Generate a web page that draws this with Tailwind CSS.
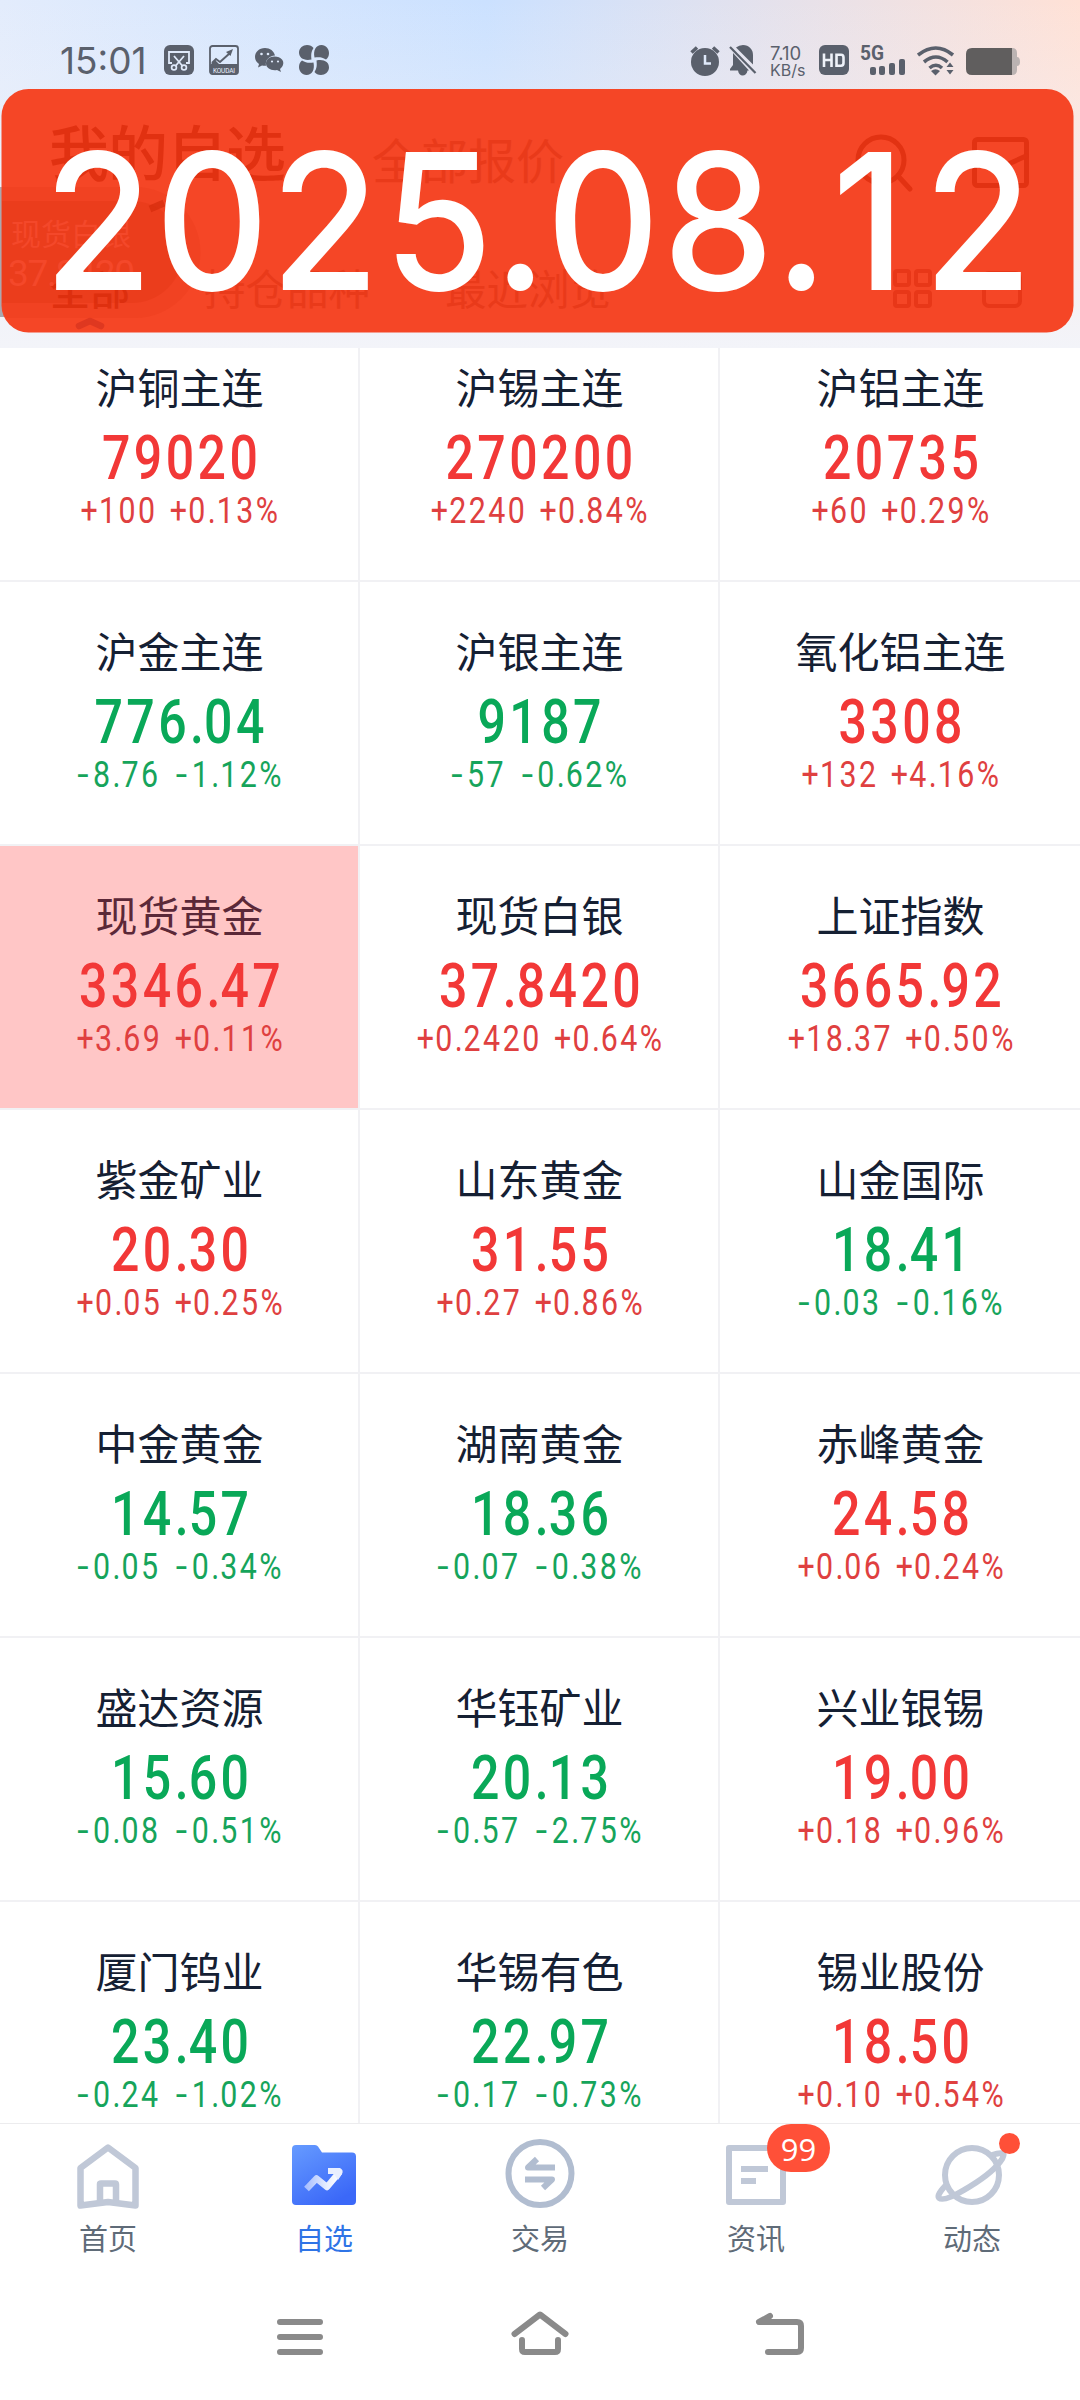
<!DOCTYPE html>
<html lang="zh-CN">
<head>
  <meta charset="UTF-8" />
  <title>我的自选</title>
  <script src="https://cdn.jsdelivr.net/npm/@tailwindcss/browser@4"></script>
</head>
<body class="w-[1080px] h-[2400px] bg-white overflow-hidden flex flex-col font-['Roboto','Noto_Sans_CJK_SC',sans-serif]">

  <!-- Header -->
  <header class="relative h-[348px] shrink-0 bg-linear-to-r from-[#e3ecfc] via-[#cbe1ff] via-45% to-[#ffe1d6]">
    <div class="absolute inset-0 bg-linear-to-b from-transparent to-[#f3f4f9]"></div>

    <!-- Status bar -->
    <div class="relative h-[89px] pt-[45px] pl-[60px] flex items-start text-[#5a606c]">
      <div class="w-[104px] h-[30px] leading-[31px] text-[37px] font-['Inter'] font-normal whitespace-nowrap">15:01</div>
      <svg class="w-[30px] h-[30px]" viewBox="0 0 30 30">
        <rect width="30" height="30" rx="6" fill="currentColor"/>
        <path d="M8 18H5V7H25V18H22" fill="none" stroke="#dfe9fa" stroke-width="1.8"/>
        <path d="M10 11L18.500 21M20 11L11.500 21" stroke="#dfe9fa" stroke-width="1.8"/>
        <circle cx="10" cy="22.500" r="2.400" fill="none" stroke="#dfe9fa" stroke-width="1.700"/>
        <circle cx="20" cy="22.500" r="2.400" fill="none" stroke="#dfe9fa" stroke-width="1.700"/>
      </svg>
      <svg class="w-[30px] h-[30px] ml-[15px]" viewBox="0 0 30 30">
        <rect x="1" y="1" width="28" height="28" rx="2.500" fill="none" stroke="currentColor" stroke-width="1.800"/>
        <path d="M1 20L6 15L10 19H29V29H1Z" fill="currentColor"/>
        <path d="M3 18L7 14L11 17L21 8" fill="none" stroke="currentColor" stroke-width="2"/>
        <path d="M17 7L24 4L21.500 11Z" fill="currentColor"/>
        <text x="15" y="27.500" font-size="6.500" text-anchor="middle" fill="#eaf1fd" textLength="22">KOUDAI</text>
      </svg>
      <svg class="w-[30px] h-[26px] ml-[15px] mt-[2px]" viewBox="0 0 30 26">
        <path d="M11 1C5 1 1 5 1 10C1 13 2.500 15 5 17L4 20.500L8 18.500Q10 19 12 18.800C11 13 15 9 21 8.500C20 4 16 1 11 1Z" fill="currentColor"/>
        <path d="M20.500 9.500C15.500 9.500 12 12.500 12 16.500C12 21 17 24 23 23L27 25L26 22C30 19 30 15 28 12.500Q25.500 9.500 20.500 9.500Z" fill="currentColor"/>
        <g fill="#dfe9fa"><circle cx="7.500" cy="7" r="1.300"/><circle cx="14" cy="7" r="1.300"/><circle cx="18" cy="14.500" r="1.100"/><circle cx="24" cy="14.500" r="1.100"/></g>
      </svg>
      <svg class="w-[30px] h-[30px] ml-[15px]" viewBox="0 0 30 30">
        <g fill="currentColor">
          <path d="M12.500 14.500C5 16 0 13 0 7.500C0 3 4 0 8 0C11 0 13 1 14.500 3C12 7 12 10 12.500 14.500Z"/>
          <path d="M15.500 12.500C14 5 17 0 22.500 0C27 0 30 4 30 8C30 11 29 13 27 14.500C23 12 20 12 15.500 12.500Z"/>
          <path d="M17.500 15.500C25 14 30 17 30 22.500C30 27 26 30 22 30C19 30 17 29 15.500 27C18 23 18 20 17.500 15.500Z"/>
          <path d="M14.500 17.500C16 25 13 30 7.500 30C3 30 0 26 0 22C0 19 1 17 3 15.500C7 18 10 18 14.500 17.500Z"/>
        </g>
      </svg>

      <svg class="w-[30px] h-[31px] ml-[361px]" viewBox="0 0 30 31">
        <circle cx="15" cy="17" r="14" fill="currentColor"/>
        <path d="M1.500 7.500L7 2.500M28.500 7.500L23 2.500" stroke="currentColor" stroke-width="3.500"/>
        <path d="M15 10V18.500H21" fill="none" stroke="#dfe9fa" stroke-width="2.500"/>
      </svg>
      <svg class="w-[28px] h-[31px] ml-[9px]" viewBox="0 0 28 31">
        <path d="M7 2.500Q10 0 14 0C20 0 24 4.500 24 10V19.500Z" fill="currentColor"/>
        <path d="M4 8V20L1 24V25.500H9C9.500 29 11.500 30.500 13.500 30.500C16 30.500 18 29 18.500 25.500H20Z" fill="currentColor"/>
        <path d="M1 2L26.500 28" stroke="currentColor" stroke-width="2.200"/>
      </svg>
      <div class="w-[36px] ml-[13px] font-['Inter'] whitespace-nowrap">
        <div class="text-[18.500px] leading-[16px]">7.10</div>
        <div class="text-[16px] leading-[18px]">KB/s</div>
      </div>
      <svg class="w-[30px] h-[30px] ml-[13px]" viewBox="0 0 30 30">
        <rect width="30" height="30" rx="6" fill="currentColor"/>
        <path d="M5 8.500V22M12.500 8.500V22M5 15H12.500M17.500 9.800H22Q24.500 9.800 24.500 12.500V18Q24.500 20.700 22 20.700H17.500Z" fill="none" stroke="#eef1f8" stroke-width="2.600"/>
      </svg>
      <svg class="w-[46px] h-[31px] ml-[11px]" viewBox="0 0 46 31">
        <text x="0" y="15" font-size="21" font-weight="700" fill="currentColor" textLength="24" lengthAdjust="spacingAndGlyphs">5G</text>
        <g fill="currentColor"><rect x="10" y="22" width="6" height="8" rx="2"/><rect x="19" y="21" width="6" height="9" rx="2"/><rect x="29" y="18" width="6" height="12" rx="2"/><rect x="39" y="14" width="6" height="16" rx="2"/></g>
      </svg>
      <svg class="w-[38px] h-[31px] ml-[11px]" viewBox="0 0 38 31">
        <g fill="none" stroke="currentColor" stroke-width="3.600"><path d="M1 10Q19 -4 36 10"/><path d="M7 17Q19 7 30.500 17"/><path d="M12.500 23Q19 17.500 25 23"/></g>
        <path d="M14 26Q18.500 22.500 23 26L18.500 30.500Z" fill="currentColor"/>
        <path d="M29.500 22L33 17.500L36.500 22ZM29.500 25L33 29.500L36.500 25Z" fill="currentColor"/>
      </svg>
      <svg class="w-[54px] h-[28px] ml-[11px] mt-[3px] text-[#605e5e]" viewBox="0 0 54 28">
        <path d="M40 0H46Q51 0 51 5V9Q54 9 54 14Q54 18 51 18V22Q51 27 46 27H40Z" fill="#bbb3b2"/>
        <path d="M6 0H46V27H6Q0 27 0 21V6Q0 0 6 0Z" fill="currentColor"/>
      </svg>
    </div>

    <!-- Date banner, with the page header showing faintly behind -->
    <div class="absolute left-0 top-[187px] w-[20px] h-[130px] bg-[#a9a9b1]"></div>
    <svg class="absolute left-0 top-[89px] w-[1080px] h-[244px]" viewBox="0 89 1080 244" font-family="Roboto, 'Noto Sans CJK SC', sans-serif">
      <rect x="1.500" y="89" width="1072" height="243.500" rx="27" fill="#f54626"/>
      <g fill="#e13111">
        <text x="49" y="176" font-size="60" font-weight="500" textLength="237">我的自选</text>
        <text x="50" y="305" font-size="40" font-weight="500">全部</text>
      </g>
      <g fill="#e93a1a">
        <text x="372" y="179" font-size="48">全部报价</text>
        <text x="204" y="305" font-size="41.500">持仓品种</text>
        <text x="445" y="305" font-size="41.500">最近浏览</text>
      </g>
      <path d="M150 209L164 203" stroke="#df3414" stroke-width="7" fill="none"/>
      <path d="M2 187H135A64 64 0 0 1 135 318H6Q2 310 2 300Z" fill="#d82c0c" fill-opacity=".12"/>
      <path d="M2 201H132A51 51 0 0 1 132 303H2Z" fill="#d82c0c" fill-opacity=".24"/>
      <g fill="#f4482a">
        <text x="11" y="245" font-size="30">现货白银</text>
        <text x="8" y="286" font-size="37" textLength="127">37.8420</text>
      </g>
      <path d="M79 326L90 321L101 326" fill="none" stroke="#df3820" stroke-width="6.500" stroke-linecap="round" stroke-linejoin="round"/>
      <g fill="none" stroke="#e23212" stroke-width="5" stroke-linecap="round" stroke-linejoin="round">
        <circle cx="881" cy="160" r="23"/><path d="M898 176L910 189"/>
        <rect x="974.500" y="139.500" width="52" height="46" rx="3"/><path d="M975 165L990 158L1004 166L1026 156"/>
      </g>
      <g fill="none" stroke="#e83718" stroke-width="4">
        <rect x="895" y="271" width="14" height="14" rx="2"/><rect x="916" y="271" width="14" height="14" rx="2"/>
        <rect x="895" y="292" width="14" height="14" rx="2"/><rect x="916" y="292" width="14" height="14" rx="2"/>
        <rect x="984" y="273" width="36" height="33" rx="5"/>
      </g>
      <text transform="scale(.93 1)" x="105.500 228 349.500 471.500 559.500 648.500 772.500 861.500 934 1051.500" y="290.500" fill="#fff" font-family="Inter" font-size="190" font-weight="550" text-anchor="middle">2025.08.12</text>
    </svg>
  </header>

  <!-- Quotes -->
  <main class="h-[1775px] shrink-0 overflow-hidden">
    <div id="quotes" class="grid grid-cols-3 -mt-[30px]"></div>
  </main>

  <!-- Tab bar -->
  <nav class="h-[149px] shrink-0 border-t border-[#ececee] grid grid-cols-5 text-[29px] leading-[32px] text-[#5f6b78]">
    <div class="pt-[10px] flex flex-col items-center gap-[10px]">
      <svg class="w-[80px] h-[80px]" viewBox="0 0 80 80" fill="none" stroke="#c0c8d7" stroke-width="6.500" stroke-linejoin="round">
        <path d="M40 13.500L67.500 34V71.500L40 68L12.500 71.500V34Z"/>
        <path d="M32 68V50Q32 49.500 33 49.500H47Q48 49.500 48 50.500V68"/>
      </svg>
      <span>首页</span>
    </div>
    <div class="pt-[10px] flex flex-col items-center gap-[10px] text-[#2f74e6]">
      <svg class="w-[80px] h-[80px]" viewBox="0 0 80 80">
        <defs>
          <linearGradient id="folder" x1="0" y1="0" x2=".6" y2="1"><stop stop-color="#669bff"/><stop offset="1" stop-color="#3b68f8"/></linearGradient>
          <linearGradient id="trend"><stop stop-color="#a9c0ff"/><stop offset=".6" stop-color="#e6edff"/><stop offset="1" stop-color="#fff"/></linearGradient>
        </defs>
        <path d="M12 11H31Q33 11 34 12.500L38 18.500H68Q72 18.500 72 22.500V67Q72 71 68 71H12Q8 71 8 67V15Q8 11 12 11Z" fill="url(#folder)"/>
        <path d="M22.500 55L32.500 44.500L43 53L55.500 38" fill="none" stroke="url(#trend)" stroke-width="6.500" stroke-linejoin="round"/>
        <path d="M44 34H56Q60 36 58 40L54 46L50 40H44Z" fill="#e9efff"/>
      </svg>
      <span>自选</span>
    </div>
    <div class="pt-[10px] flex flex-col items-center gap-[10px]">
      <svg class="w-[80px] h-[80px]" viewBox="0 0 80 80" fill="none" stroke="#b1bdd0" stroke-width="6">
        <circle cx="40" cy="39.500" r="31.500"/>
        <path d="M55 33.500H28L37 25M25 45.500H52L43 54" stroke-linejoin="round"/>
      </svg>
      <span>交易</span>
    </div>
    <div class="relative pt-[10px] flex flex-col items-center gap-[10px]">
      <svg class="w-[80px] h-[80px]" viewBox="0 0 80 80" fill="none" stroke="#c0c8d7" stroke-width="6">
        <rect x="13" y="14" width="54" height="54" stroke-linejoin="round"/>
        <path d="M25 35H52M25 47H40"/>
      </svg>
      <span>资讯</span>
      <div class="absolute left-[119px] top-0 w-[63px] h-[48px] rounded-full bg-[#ff5038] text-white text-[31px] leading-[51px] text-center font-['Open_Sans']">99</div>
    </div>
    <div class="relative pt-[10px] flex flex-col items-center gap-[10px]">
      <svg class="w-[80px] h-[80px]" viewBox="0 0 80 80" fill="none" stroke="#c0c8d7" stroke-width="6">
        <circle cx="40" cy="41" r="27"/>
        <path d="M16 49Q4 61 7 64Q12 68 32 56Q58 41 68 28Q78 15 60 21"/>
      </svg>
      <span>动态</span>
      <div class="absolute left-[135px] top-[9px] size-[21px] rounded-full bg-[#ff5038]"></div>
    </div>
  </nav>

  <!-- System navigation -->
  <div class="flex-1 pt-[35px] pl-[270px] flex gap-[180px]">
    <svg class="w-[60px] h-[60px]" viewBox="0 0 60 60" stroke="#8a8a8a" stroke-width="6" stroke-linecap="round"><path d="M10 15H50M10 30H50M10 45H50"/></svg>
    <svg class="w-[60px] h-[60px]" viewBox="0 0 60 60" fill="none" stroke="#8a8a8a" stroke-width="6" stroke-linecap="round" stroke-linejoin="round"><path d="M4.500 27L30 7.500L55.500 27"/><path d="M12 33V42Q12 45 15 45H45Q48 45 48 42V33"/></svg>
    <svg class="w-[60px] h-[60px]" viewBox="0 0 60 60" fill="none" stroke="#8a8a8a" stroke-width="6" stroke-linecap="round" stroke-linejoin="round"><path d="M20 9L9 15H47Q51 15 51 19V41Q51 45 47 45H18"/></svg>
  </div>

  <script>
    // name, price, change, percent
    const quotes = [
      ["沪铜主连", "79020", "+100", "+0.13%"],
      ["沪锡主连", "270200", "+2240", "+0.84%"],
      ["沪铝主连", "20735", "+60", "+0.29%"],
      ["沪金主连", "776.04", "-8.76", "-1.12%"],
      ["沪银主连", "9187", "-57", "-0.62%"],
      ["氧化铝主连", "3308", "+132", "+4.16%"],
      ["现货黄金", "3346.47", "+3.69", "+0.11%"],
      ["现货白银", "37.8420", "+0.2420", "+0.64%"],
      ["上证指数", "3665.92", "+18.37", "+0.50%"],
      ["紫金矿业", "20.30", "+0.05", "+0.25%"],
      ["山东黄金", "31.55", "+0.27", "+0.86%"],
      ["山金国际", "18.41", "-0.03", "-0.16%"],
      ["中金黄金", "14.57", "-0.05", "-0.34%"],
      ["湖南黄金", "18.36", "-0.07", "-0.38%"],
      ["赤峰黄金", "24.58", "+0.06", "+0.24%"],
      ["盛达资源", "15.60", "-0.08", "-0.51%"],
      ["华钰矿业", "20.13", "-0.57", "-2.75%"],
      ["兴业银锡", "19.00", "+0.18", "+0.96%"],
      ["厦门钨业", "23.40", "-0.24", "-1.02%"],
      ["华锡有色", "22.97", "-0.17", "-0.73%"],
      ["锡业股份", "18.50", "+0.10", "+0.54%"]
    ];
    const flashing = "现货黄金";

    // the point and the plus sit tight, the minus is drawn wide
    function figure(text) {
      return text
        .replace(".", '<span class="tracking-[1px]">.</span>')
        .replace("+", '<span class="tracking-[1.500px]">+</span>')
        .replace(/^-/, '<span class="inline-block origin-left scale-x-[1.350] mr-[6px]">-</span>');
    }

    document.getElementById("quotes").innerHTML = quotes.map(([name, price, change, percent], i) => {
      const up = change[0] === "+";
      const border = i % 3 < 2 ? "border-r-2" : "";
      const cell = name === flashing ? "bg-[#ffc6c6] text-[#5b2838]" : "text-[#152033]";
      return `
        <div class="h-[264px] pt-[51px] border-b-2 border-[#f1f1f4] flex flex-col items-center whitespace-nowrap ${border} ${cell}">
          <div class="pl-px text-[42px] leading-[42px]">${name}</div>
          <div class="mt-[17px] pl-[6px] text-[61px] leading-[60px] font-medium tracking-[4.200px] scale-x-[.82] ${up ? "text-[#f23837]" : "text-[#09a858]"}">${price.replace(".", '<span class="tracking-[0px]">.</span>')}</div>
          <div class="mt-[3px] pl-[4px] flex text-[37px] leading-[40px] tracking-[3px] scale-x-[.82] ${up ? "gap-[15px] text-[#df4040]" : "gap-[19px] text-[#16a45b]"}"><span>${figure(change)}</span><span>${figure(percent)}</span></div>
        </div>`;
    }).join("");
  </script>

</body>
</html>
